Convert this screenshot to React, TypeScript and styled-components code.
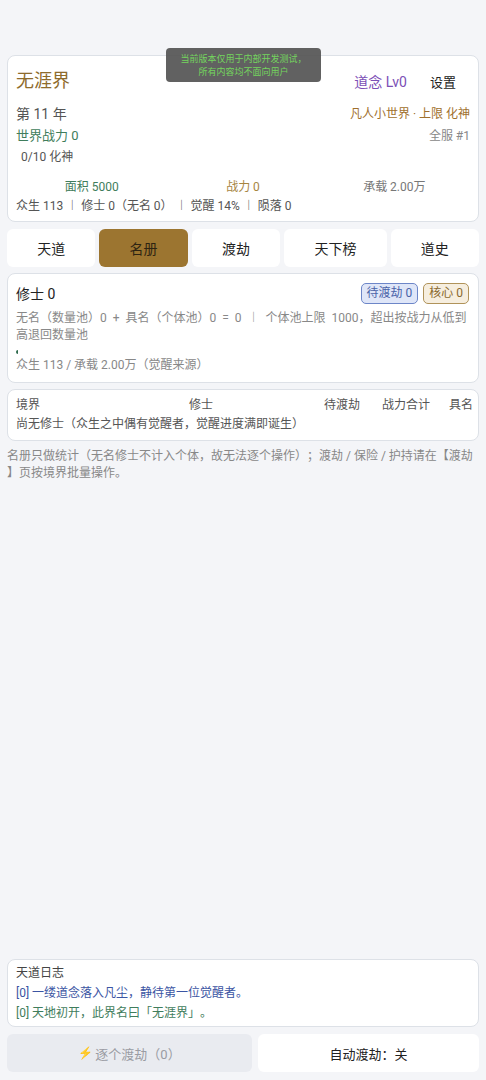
import styled, { createGlobalStyle } from 'styled-components'

const GlobalStyle = createGlobalStyle`
  html, body {
    margin: 0;
    padding: 0;
    background: #f4f5f8;
  }
  body {
    font-family: Roboto, "Noto Sans CJK SC", sans-serif;
    color: #333;
    text-spacing-trim: space-all;
  }
  * {
    box-sizing: border-box;
  }
`

const tabs = ['天道', '名册', '渡劫', '天下榜', '道史']

const App = () => {
  return (
    <Page>
      <GlobalStyle />
      <Toast>
        当前版本仅用于内部开发测试，
        <br />
        所有内容均不面向用户
      </Toast>

      <Card $pad="12px 8px 6px">
        <HeaderRow>
          <WorldName>无涯界</WorldName>
          <HeaderRight>
            <Daonian>道念 Lv0</Daonian>
            <SettingsLink>设置</SettingsLink>
          </HeaderRight>
        </HeaderRow>
        <InfoRow $top={10}>
          <Year>第 11 年</Year>
          <Realm>凡人小世界 · 上限 化神</Realm>
        </InfoRow>
        <InfoRow $top={2}>
          <Power>世界战力 0</Power>
          <Rank>全服 #1</Rank>
        </InfoRow>
        <Progress>0/10 化神</Progress>
        <StatGrid>
          <Stat $color="#3f7d5c">面积 5000</Stat>
          <Stat $color="#a7853f">战力 0</Stat>
          <Stat $color="#777">承载 2.00万</Stat>
        </StatGrid>
        <Summary>众生 113 ︱ 修士 0（无名 0） ︱ 觉醒 14% ︱ 陨落 0</Summary>
      </Card>

      <TabBar>
        {tabs.map((t) => (
          <Tab key={t} $active={t === '名册'}>
            {t}
          </Tab>
        ))}
      </TabBar>

      <Card $pad="9px 8px 8px">
        <HeaderRow>
          <SectionTitle>修士 0</SectionTitle>
          <Badges>
            <Badge $bg="#dfe6f8" $border="#6d86c8" $color="#4a63a8">
              待渡劫 0
            </Badge>
            <Badge $bg="#f6eedf" $border="#b0935a" $color="#8a6a30">
              核心 0
            </Badge>
          </Badges>
        </HeaderRow>
        <Muted $top={6} $spaced>
          无名（数量池）0 + 具名（个体池）0 = 0 ︱ 个体池上限 1000，超出按战力从低到高退回数量池
        </Muted>
        <Bar>
          <BarFill style={{ width: '0.5%' }} />
        </Bar>
        <Muted $top={2}>众生 113 / 承载 2.00万（觉醒来源）</Muted>
      </Card>

      <Card $pad="6px 8px 6px">
        <TableHead>
          <span>境界</span>
          <span>修士</span>
          <span>待渡劫</span>
          <span>战力合计</span>
          <span>具名</span>
        </TableHead>
        <EmptyRow>尚无修士（众生之中偶有觉醒者，觉醒进度满即诞生）</EmptyRow>
      </Card>

      <Note>
        名册只做统计（无名修士不计入个体，故无法逐个操作）；渡劫 / 保险 / 护持请在【渡劫】页按境界批量操作。
      </Note>

      <Spacer />

      <Card $pad="3px 8px 3px">
        <LogTitle>天道日志</LogTitle>
        <LogLine $color="#3b55a3">[0] 一缕道念落入凡尘，静待第一位觉醒者。</LogLine>
        <LogLine $color="#3f7d5c">[0] 天地初开，此界名曰「无涯界」。</LogLine>
      </Card>

      <Footer>
        <ActionButton $disabled>
          <Bolt>⚡</Bolt>逐个渡劫（0）
        </ActionButton>
        <ActionButton>自动渡劫：关</ActionButton>
      </Footer>
    </Page>
  )
}

export default App

const Page = styled.div`
  position: relative;
  min-height: 100vh;
  display: flex;
  flex-direction: column;
  gap: 6px;
  padding: 55px 7px 8px;
`

const Toast = styled.div`
  position: absolute;
  top: 48px;
  left: 166px;
  width: 155px;
  height: 34px;
  padding-top: 4px;
  border-radius: 4px;
  background: rgba(84, 84, 84, 0.92);
  color: #74d45e;
  font-family: "Noto Sans CJK SC", serif;
  font-size: 9px;
  line-height: 13px;
  text-align: center;
  z-index: 10;
`

const Card = styled.div<{ $pad?: string }>`
  background: #fff;
  border: 1px solid #dde1e7;
  border-radius: 8px;
  padding: ${(p) => p.$pad || '12px 8px 8px'};
`

const HeaderRow = styled.div`
  display: flex;
  align-items: center;
  justify-content: space-between;
`

const WorldName = styled.div`
  font-size: 18px;
  line-height: 26px;
  color: #8e6b2c;
`

const HeaderRight = styled.div`
  display: flex;
  align-items: center;
  gap: 23px;
  padding-right: 14px;
`

const Daonian = styled.span`
  font-size: 14px;
  color: #7c4fb6;
`

const SettingsLink = styled.span`
  font-size: 13px;
  color: #222;
`

const InfoRow = styled.div<{ $top: number }>`
  display: flex;
  justify-content: space-between;
  align-items: center;
  margin-top: ${(p) => p.$top}px;
  line-height: 20px;
`

const Year = styled.span`
  font-size: 14px;
  color: #555;
`

const Realm = styled.span`
  font-size: 12px;
  color: #a06f2c;
`

const Power = styled.span`
  font-size: 13px;
  color: #3f7d5c;
`

const Rank = styled.span`
  font-size: 12px;
  color: #888;
`

const Progress = styled.div`
  margin-top: 1px;
  padding-left: 5px;
  font-size: 12px;
  line-height: 20px;
  color: #555;
`

const StatGrid = styled.div`
  display: grid;
  grid-template-columns: 1fr 1fr 1fr;
  margin-top: 11px;
`

const Stat = styled.span<{ $color: string }>`
  text-align: center;
  font-size: 12px;
  line-height: 18px;
  color: ${(p) => p.$color};
`

const Summary = styled.div`
  margin-top: 1px;
  font-size: 12px;
  line-height: 18px;
  color: #555;
`

const TabBar = styled.div`
  display: flex;
  gap: 4px;
  margin-top: 1px;
`

const Tab = styled.div<{ $active?: boolean }>`
  flex: 1 1 auto;
  height: 38px;
  display: flex;
  align-items: center;
  justify-content: center;
  padding: 0 20px;
  border-radius: 6px;
  font-size: 14px;
  background: ${(p) => (p.$active ? '#9c7530' : '#fff')};
  color: ${(p) => (p.$active ? '#2e2412' : '#222')};
`

const SectionTitle = styled.div`
  font-size: 14px;
  line-height: 20px;
  color: #222;
`

const Badges = styled.div`
  display: flex;
  gap: 5px;
  padding-right: 1px;
`

const Badge = styled.span<{ $bg: string; $border: string; $color: string }>`
  padding: 0 5px;
  height: 21px;
  line-height: 19px;
  border-radius: 5px;
  font-size: 12px;
  background: ${(p) => p.$bg};
  border: 1px solid ${(p) => p.$border};
  color: ${(p) => p.$color};
`

const Muted = styled.div<{ $top: number; $spaced?: boolean }>`
  margin-top: ${(p) => p.$top}px;
  font-size: 12px;
  line-height: 17px;
  color: #888;
  word-spacing: ${(p) => (p.$spaced ? '3px' : 'normal')};
`

const Bar = styled.div`
  height: 4px;
  margin: 6px 0 3px;
  border-radius: 2px;
  overflow: hidden;
`

const BarFill = styled.div`
  height: 100%;
  min-width: 2px;
  background: #2f6b4d;
`

const TableHead = styled.div`
  display: grid;
  grid-template-columns: 173px 135px 58px 67px 1fr;
  white-space: nowrap;
  font-size: 12px;
  line-height: 19px;
  color: #555;
`

const EmptyRow = styled.div`
  font-size: 12px;
  line-height: 19px;
  color: #555;
`

const Note = styled.div`
  padding: 0;
  margin-top: 1px;
  font-size: 12px;
  line-height: 17px;
  color: #888;
  line-break: anywhere;
`

const Spacer = styled.div`
  flex: 1;
`

const LogTitle = styled.div`
  font-size: 12px;
  line-height: 20px;
  color: #444;
`

const LogLine = styled.div<{ $color: string }>`
  font-size: 12px;
  line-height: 20px;
  color: ${(p) => p.$color};
`

const Footer = styled.div`
  display: grid;
  grid-template-columns: 245px 1fr;
  gap: 6px;
  margin-top: 1px;
`

const ActionButton = styled.div<{ $disabled?: boolean }>`
  height: 38px;
  display: flex;
  align-items: center;
  justify-content: center;
  border-radius: 6px;
  font-size: 13px;
  background: ${(p) => (p.$disabled ? '#e9ebf0' : '#fff')};
  color: ${(p) => (p.$disabled ? '#9a9ca3' : '#222')};
`

const Bolt = styled.span`
  color: #f0a030;
  font-size: 12px;
  margin-right: 2px;
`
